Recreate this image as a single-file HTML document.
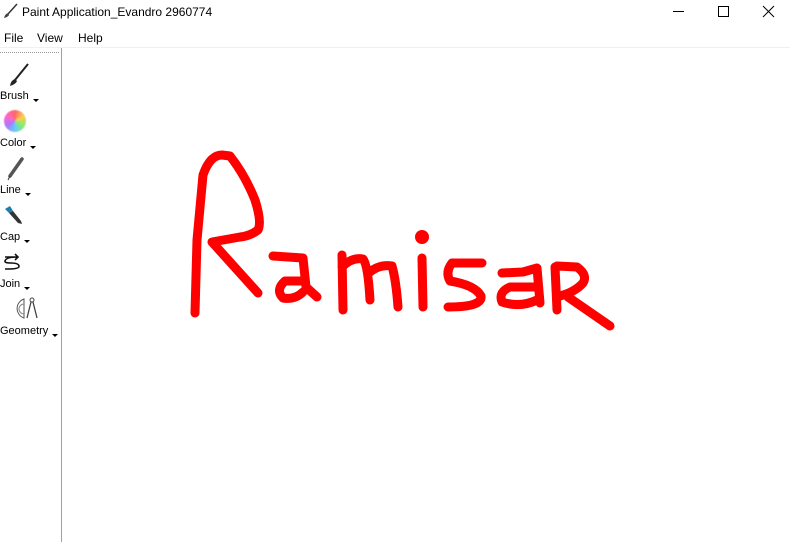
<!DOCTYPE html>
<html><head><meta charset="utf-8"><style>
*{margin:0;padding:0;box-sizing:border-box}
body{width:790px;height:542px;background:#fff;font-family:"Liberation Sans",sans-serif;font-size:12px;color:#000;position:relative;overflow:hidden}
.t{position:absolute;white-space:nowrap}
.arr{display:inline-block;width:0;height:0;border-left:3px solid transparent;border-right:3px solid transparent;border-top:3px solid #000;margin-left:4px;vertical-align:-3px}
</style></head><body>
<svg class="t" style="left:3px;top:3px" width="16" height="16" viewBox="0 0 16 16"><path d="M14 1 L5 11" stroke="#333" stroke-width="1.5" fill="none"/><path d="M5 10 Q2 11 1 15 Q5 14 6 12Z" fill="#444"/></svg>
<div class="t" style="left:22px;top:5px;font-size:12px">Paint Application_Evandro 2960774</div>
<svg class="t" style="left:670px;top:4px" width="115" height="16"><path d="M3 7.5H14" stroke="#000"/><rect x="48.5" y="2.5" width="10" height="10" fill="none" stroke="#000"/><path d="M93 2L104 13M104 2L93 13" stroke="#000"/></svg>
<div class="t" style="left:4px;top:31px">File</div>
<div class="t" style="left:37px;top:31px">View</div>
<div class="t" style="left:78px;top:31px">Help</div>
<div class="t" style="left:0;top:47px;width:790px;height:1px;background:#f0f0f0"></div>
<div class="t" style="left:0;top:52px;width:59px;border-top:1px dotted #999"></div>
<div class="t" style="left:61px;top:48px;width:1px;height:494px;background:#a0a0a0"></div>
<svg class="t" style="left:6px;top:62px" width="24" height="26"><path d="M22 2 L9 18" stroke="#222" stroke-width="2" fill="none"/><path d="M9 17 Q5 18 4 24 Q10 22 11 19Z" fill="#222"/></svg>
<div class="t" style="left:0;top:90px;font-size:11px">Brush<span class="arr"></span></div>
<div class="t" style="left:4px;top:110px;width:22px;height:22px;border-radius:50%;background:conic-gradient(#f66,#fc5,#8e6,#6cf,#a7f,#f6c,#f66);filter:blur(.6px)"></div>
<div class="t" style="left:0;top:137px;font-size:11px">Color<span class="arr"></span></div>
<svg class="t" style="left:5px;top:157px" width="20" height="24"><path d="M17 2 L5 19" stroke="#555" stroke-width="3.5" stroke-linecap="round"/><path d="M5 19 L3 23" stroke="#333" stroke-width="1"/></svg>
<div class="t" style="left:0;top:184px;font-size:11px">Line<span class="arr"></span></div>
<svg class="t" style="left:4px;top:205px" width="20" height="20"><path d="M1 4 L6 1 L9 6 L5 8Z" fill="#1a7fb0"/><path d="M5 8 L9 6 L17 16 L18 19 L14 18Z" fill="#333"/></svg>
<div class="t" style="left:0;top:231px;font-size:11px">Cap<span class="arr"></span></div>
<svg class="t" style="left:3px;top:253px" width="20" height="18"><path d="M2 4 H15 M12 1 L15 4 L12 7 M15 4 Q2 4 2 8.5 Q2 10 8 10 Q16 10 16 13.5 Q16 16 4 16 H2" stroke="#111" stroke-width="1.6" fill="none"/></svg>
<div class="t" style="left:0;top:278px;font-size:11px">Join<span class="arr"></span></div>
<svg class="t" style="left:14px;top:296px" width="26" height="24"><path d="M10 3 A10 10 0 0 0 10 22Z" fill="none" stroke="#555"/><path d="M10 8 A5 5 0 0 0 10 18" fill="none" stroke="#888"/><circle cx="18" cy="4" r="2" fill="none" stroke="#444"/><path d="M17 6 L13 22 M19 6 L23 22" stroke="#444" stroke-width="1.3"/></svg>
<div class="t" style="left:0;top:325px;font-size:11px">Geometry<span class="arr"></span></div>
<svg class="t" style="left:0;top:0" width="790" height="542"><g stroke="#f00" stroke-width="9" fill="none" stroke-linecap="round" stroke-linejoin="round">
<path d="M195 313 L197 240 L203 175 Q210 155 222 155 L230 156 Q245 175 255 200 Q262 222 258 230 Q250 236 240 237 L212 242 L258 293"/>
<path d="M273 256 L303 258 L306 287 L317 297 M303 281 L285 281 Q275 290 283 298 Q295 300 303 292"/>
<path d="M342 255 L343 310 M342 267 Q352 257 363 259 Q368 265 370 300 M370 272 Q380 264 392 266 Q396 280 398 307"/>
<circle cx="422" cy="237" r="2.5" fill="#f00"/>
<path d="M422 258 L423 307"/>
<path d="M482 263 L452 263 Q445 272 450 281 Q475 285 481 296 Q483 307 448 307"/>
<path d="M502 273 L523 272 L537 268 L540 303 M537 287 L510 287 Q498 292 502 302 Q520 308 537 300"/>
<path d="M555 267 L557 310 M557 266 L577 267 Q588 275 583 283 Q575 292 560 296 M568 297 L610 326"/>
</g></svg>
</body></html>
